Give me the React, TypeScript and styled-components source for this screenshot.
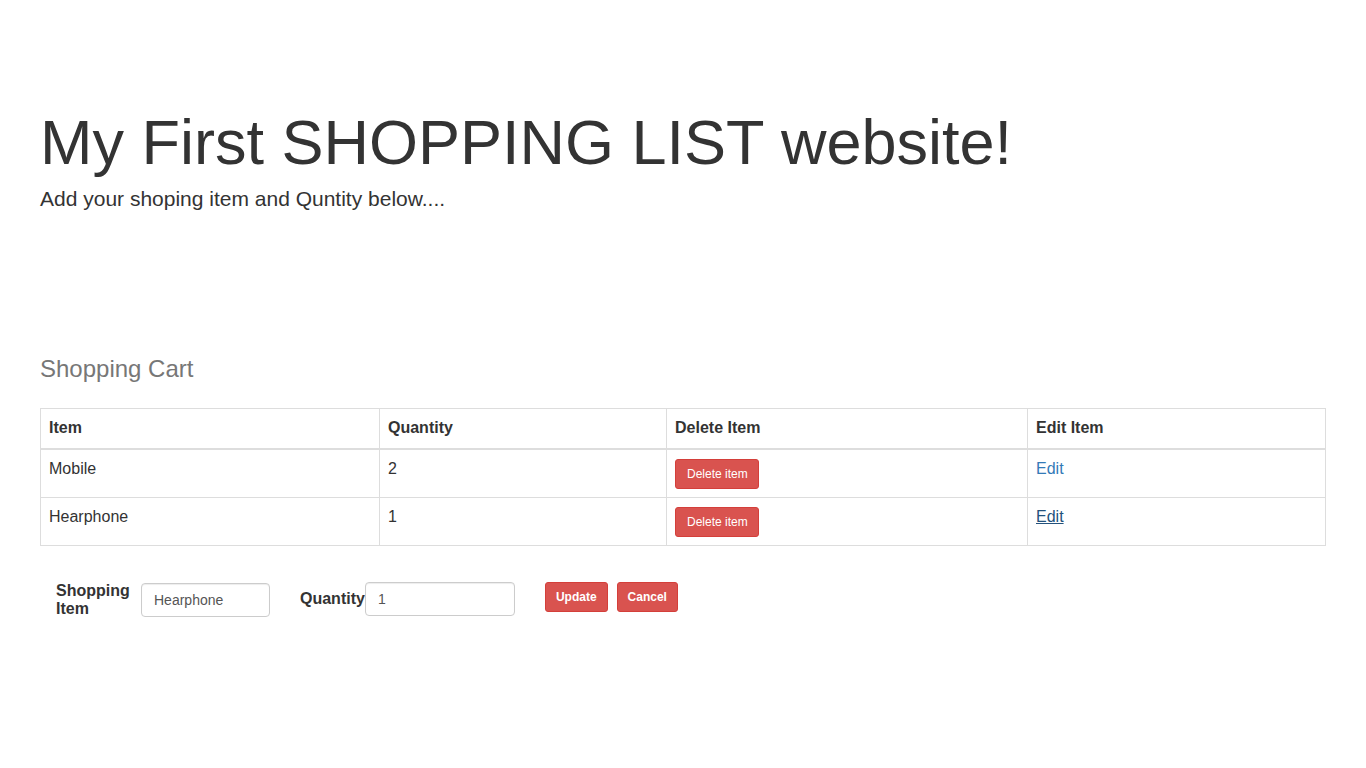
import React from "react";
import styled, { createGlobalStyle } from "styled-components";

const GlobalStyle = createGlobalStyle`
  html, body {
    margin: 0;
    padding: 0;
    background: #fff;
  }
  body {
    font-family: "Liberation Sans", Arial, Helvetica, sans-serif;
    font-size: 14px;
    line-height: 1.42857143;
    color: #333;
  }
  * { box-sizing: border-box; }
`;

const Page = styled.div`
  padding: 108px 40px 40px;
`;

const Title = styled.h1`
  margin: 0;
  font-size: 63px;
  font-weight: 400;
  line-height: 1.1;
  color: #333;
`;

const Lead = styled.p`
  margin: 7px 0 0;
  font-size: 21px;
  line-height: 30px;
  font-weight: 400;
`;

const CartTitle = styled.h3`
  margin: 142px 0 0;
  font-size: 24px;
  font-weight: 400;
  line-height: 1.1;
  color: #777;
`;

const Table = styled.table`
  margin-top: 25px;
  width: 100%;
  border-collapse: collapse;
  border-spacing: 0;
  table-layout: fixed;
  border: 1px solid #ddd;
  font-size: 16px;
`;

const HeadCell = styled.th`
  text-align: left;
  font-weight: 700;
  padding: 8px;
  line-height: 1.42857143;
  vertical-align: bottom;
  border: 1px solid #ddd;
  border-bottom: 2px solid #ddd;
`;

const Cell = styled.td<{ $shadow?: boolean }>`
  padding: 8px;
  line-height: 1.42857143;
  vertical-align: top;
  border: 1px solid #ddd;
  ${(p) => (p.$shadow ? "box-shadow: 0 1px 0 #ddd;" : "")}
`;

const Btn = styled.button<{ $bold?: boolean }>`
  display: inline-block;
  font-family: "Liberation Sans", Arial, sans-serif;
  font-size: 12px;
  line-height: 1.5;
  font-weight: ${(p) => (p.$bold ? 700 : 400)};
  padding: 5px 10px;
  color: #fff;
  background: #d9534f;
  border: 1px solid #d43f3a;
  border-radius: 3px;
  cursor: pointer;
  vertical-align: top;
`;

const DeleteBtn = styled(Btn)`
  margin-top: 1px;
  padding: 5px 10px 5px 11px;
`;

const EditLink = styled.a<{ $active?: boolean }>`
  color: ${(p) => (p.$active ? "#23527c" : "#337ab7")};
  text-decoration: ${(p) => (p.$active ? "underline" : "none")};
  cursor: pointer;
`;

const FormRow = styled.div`
  display: flex;
  align-items: flex-start;
  margin-top: 36px;
  padding-left: 16px;
`;

const Field = styled.div<{ $gap?: number }>`
  display: flex;
  align-items: flex-start;
  margin-left: ${(p) => p.$gap ?? 0}px;
`;

const Label = styled.label<{ $width?: number; $lh?: number; $mr?: number }>`
  display: block;
  font-size: 16px;
  font-weight: 700;
  width: ${(p) => (p.$width ? `${p.$width}px` : "auto")};
  line-height: ${(p) => p.$lh ?? 18}px;
  margin-right: ${(p) => p.$mr ?? 0}px;
`;

const Input = styled.input<{ $width: number; $mt?: number }>`
  display: block;
  width: ${(p) => p.$width}px;
  height: 34px;
  margin-top: ${(p) => p.$mt ?? 0}px;
  padding: 6px 12px;
  font-family: "Liberation Sans", Arial, sans-serif;
  font-size: 14px;
  line-height: 20px;
  color: #555;
  background: #fff;
  border: 1px solid #ccc;
  border-radius: 4px;
  box-shadow: inset 0 1px 1px rgba(0, 0, 0, 0.075);
  outline: none;
`;

const Actions = styled.div`
  display: flex;
  gap: 9px;
  margin-left: 30px;
`;

const items = [
  { name: "Mobile", qty: 2 },
  { name: "Hearphone", qty: 1 },
];

export default function App() {
  return (
    <>
      <GlobalStyle />
      <Page>
        <Title>My First SHOPPING LIST website!</Title>
        <Lead>Add your shoping item and Quntity below....</Lead>

        <CartTitle>Shopping Cart</CartTitle>
        <Table>
          <colgroup>
            <col style={{ width: 339 }} />
            <col style={{ width: 287 }} />
            <col style={{ width: 361 }} />
            <col />
          </colgroup>
          <thead>
            <tr>
              <HeadCell>Item</HeadCell>
              <HeadCell>Quantity</HeadCell>
              <HeadCell>Delete Item</HeadCell>
              <HeadCell>Edit Item</HeadCell>
            </tr>
          </thead>
          <tbody>
            {items.map((it, i) => (
              <tr key={it.name}>
                <Cell $shadow={i === items.length - 1}>{it.name}</Cell>
                <Cell>{it.qty}</Cell>
                <Cell>
                  <DeleteBtn>Delete item</DeleteBtn>
                </Cell>
                <Cell>
                  <EditLink $active={i === 1}>Edit</EditLink>
                </Cell>
              </tr>
            ))}
          </tbody>
        </Table>

        <FormRow>
          <Field>
            <Label $width={75} $mr={10}>Shopping Item</Label>
            <Input $width={129} $mt={1} defaultValue="Hearphone" />
          </Field>
          <Field $gap={30}>
            <Label $lh={34}>Quantity</Label>
            <Input $width={150} defaultValue="1" />
          </Field>
          <Actions>
            <Btn $bold>Update</Btn>
            <Btn $bold>Cancel</Btn>
          </Actions>
        </FormRow>
      </Page>
    </>
  );
}
